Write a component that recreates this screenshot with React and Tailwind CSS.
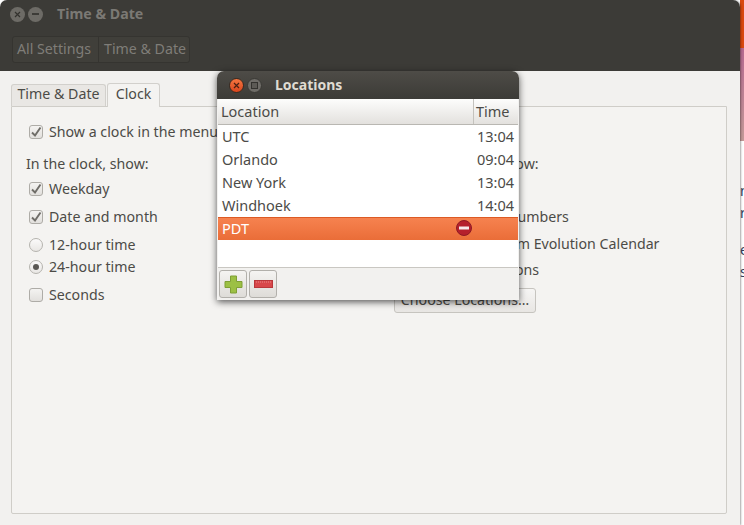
import React from "react"

const CheckBox = ({ checked }) => (
  <span className="w-[14px] h-[14px] shrink-0 rounded-[3px] border border-[#aeaca7] bg-gradient-to-b from-[#f4f3f1] to-[#e2e0dd] flex items-center justify-center">
    {checked && (
      <svg width="12" height="12" viewBox="0 0 12 12">
        <path d="M2 6.5 L5 9.5 L10.5 1.5" fill="none" stroke="#6f6d68" strokeWidth="1.9" />
      </svg>
    )}
  </span>
)

const Radio = ({ checked }) => (
  <span className="w-[14px] h-[14px] shrink-0 rounded-full border border-[#b5b3ae] bg-gradient-to-b from-[#fbfafa] to-[#e9e7e4] flex items-center justify-center">
    {checked && <span className="w-[6px] h-[6px] rounded-full bg-[#5a5854]" />}
  </span>
)

const Option = ({ control, label, className }) => (
  <div className={"flex items-center gap-[6px] h-[20px] ml-[3px] " + (className || "")}>
    {control}
    <span className="whitespace-nowrap">{label}</span>
  </div>
)

const locations = [
  ["UTC", "13:04"],
  ["Orlando", "09:04"],
  ["New York", "13:04"],
  ["Windhoek", "14:04"],
]

const LocationsDialog = () => (
  <div className="absolute z-20 left-[217px] top-[71px] w-[302px] h-[229px] flex flex-col rounded-t-[7px] bg-[#f2f1ef] text-[14.5px] shadow-[0_2px_7px_rgba(0,0,0,0.65)]">
    <div className="h-[28px] rounded-t-[7px] bg-gradient-to-b from-[#4e4c47] to-[#3c3b37] flex items-center pl-[12px]">
      <span className="w-[15px] h-[15px] rounded-full bg-gradient-to-b from-[#f4753f] to-[#d9451d] border border-[#3a2a20] flex items-center justify-center">
        <svg width="7" height="7" viewBox="0 0 7 7">
          <path d="M1 1 L6 6 M6 1 L1 6" stroke="#4a2012" strokeWidth="1.2" />
        </svg>
      </span>
      <span className="w-[15px] h-[15px] ml-[3px] rounded-full bg-[#6e6c67] border border-[#3a3935] flex items-center justify-center">
        <span className="w-[7px] h-[7px] border border-[#33322e] bg-[#5c5a55]" />
      </span>
      <span className="ml-[13px] font-bold text-[14px] text-[#dfdbd2]">Locations</span>
    </div>
    <div className="h-[26px] flex bg-gradient-to-b from-[#fdfdfc] to-[#e3e1de] border-b border-[#b9b7b2] mx-px">
      <div className="w-[256px] pl-[3px] border-r border-[#c4c2bd] flex items-center">Location</div>
      <div className="flex-1 pl-[2px] flex items-center">Time</div>
    </div>
    <div className="h-[142px] bg-white mx-px">
      <div className="h-[92px]">
        {locations.map(([name, time]) => (
          <div key={name} className="h-[23px] flex items-center justify-between px-[4px]">
            <span>{name}</span>
            <span>{time}</span>
          </div>
        ))}
      </div>
      <div className="h-[23px] flex items-center pl-[4px] pb-[2px] bg-gradient-to-b from-[#f6824f] to-[#ea6d38] border-t border-[#dc5a24] text-white">
        <span>PDT</span>
        <svg className="ml-auto mr-[46px]" width="16" height="16" viewBox="0 0 16 16">
          <circle cx="8" cy="8" r="7.5" fill="#b5202c" stroke="#8f1a24" />
          <rect x="3" y="6.5" width="10" height="3" fill="#f6e9e9" />
        </svg>
      </div>
    </div>
    <div className="flex-1 border-t border-[#c9c7c2] flex items-center gap-[2px] pl-[1px] mx-px">
      <button className="w-[28px] h-[28px] rounded-[3px] border border-[#b2b0ab] bg-gradient-to-b from-[#f5f4f2] to-[#dedcd8] flex items-center justify-center">
        <svg width="19" height="19" viewBox="0 0 19 19">
          <path d="M6.5 1 H12.5 V6.5 H18 V12.5 H12.5 V18 H6.5 V12.5 H1 V6.5 H6.5 Z" fill="#9cc044" stroke="#7f9f35" />
        </svg>
      </button>
      <button className="w-[28px] h-[28px] rounded-[3px] border border-[#b2b0ab] bg-gradient-to-b from-[#f5f4f2] to-[#dedcd8] flex items-center justify-center">
        <svg width="19" height="8" viewBox="0 0 19 8">
          <rect x="0.5" y="0.5" width="18" height="7" fill="#d8474a" stroke="#b9373a" />
          <path d="M2 2 H17" stroke="#e98a8a" strokeWidth="1" strokeDasharray="1 1" />
        </svg>
      </button>
    </div>
  </div>
)

export default function App() {
  return (
    <div
      className="relative w-[744px] h-[525px] overflow-hidden flex bg-white text-[14.2px] leading-none text-[#4c4b47]"
      style={{ fontFamily: '"Noto Sans", "Liberation Sans", sans-serif' }}
    >
      <div className="w-[740px] h-full flex flex-col bg-[#f2f1ef] rounded-t-[7px] shadow-[1px_0_2px_rgba(0,0,0,0.35)] relative z-10">
        {/* header */}
        <div className="h-[71px] shrink-0 bg-[#3c3b37] rounded-t-[7px] flex flex-col">
          <div className="h-[28px] flex items-center pl-[10px]">
            <span className="w-[15px] h-[15px] rounded-full bg-[#6d6b66] flex items-center justify-center">
              <svg width="7" height="7" viewBox="0 0 7 7">
                <path d="M1 1 L6 6 M6 1 L1 6" stroke="#33322e" strokeWidth="1.2" />
              </svg>
            </span>
            <span className="w-[15px] h-[15px] ml-[3px] rounded-full bg-[#6d6b66] flex items-center justify-center">
              <span className="w-[7px] h-[1.5px] bg-[#3c3b37]" />
            </span>
            <span className="ml-[14px] font-bold text-[14.2px] text-[#7b7974]">Time &amp; Date</span>
          </div>
          <div className="ml-[12px] mt-[8px] h-[27px] w-[178px] flex items-center rounded-[3px] border border-[#353430] bg-[#403f3a] text-[#7f7d78]">
            <div className="w-[86px] h-full flex items-center pl-[4px] border-r border-[#353430] whitespace-nowrap">All Settings</div>
            <div className="flex-1 pl-[5px] whitespace-nowrap">Time &amp; Date</div>
          </div>
        </div>

        {/* tabs */}
        <div className="flex items-end h-[35px] pl-[11px] shrink-0">
          <div className="w-[95px] h-[22px] pb-[2px] flex items-center justify-center rounded-t-[3px] border border-b-0 border-[#d2d0cc] bg-[#e9e7e4] mr-px">Time &amp; Date</div>
          <div className="w-[53px] h-[24px] pb-[3px] flex items-center justify-center rounded-t-[3px] border border-b-0 border-[#d2d0cc] bg-[#f4f3f1] -mb-px relative z-10">Clock</div>
        </div>

        {/* panel */}
        <div className="ml-[11px] w-[716px] h-[408px] shrink-0 border border-[#cfcdc8] rounded-b-[2px] bg-[#f4f3f1] pt-[15px] pl-[14px] grid grid-cols-[368px_1fr] grid-rows-[20px_1fr]">
          <Option className="col-span-2" control={<CheckBox checked />} label="Show a clock in the menu bar" />
          <div className="pt-[12px]">
            <div className="h-[20px] flex items-center">In the clock, show:</div>
            <Option className="mt-[5px]" control={<CheckBox checked />} label="Weekday" />
            <Option className="mt-[8px]" control={<CheckBox checked />} label="Date and month" />
            <Option className="mt-[8px]" control={<Radio />} label="12-hour time" />
            <Option className="mt-[2px]" control={<Radio checked />} label="24-hour time" />
            <Option className="mt-[8px]" control={<CheckBox />} label="Seconds" />
          </div>
          <div className="pt-[12px]">
            <div className="h-[20px] flex items-center">In the calendar, show:</div>
            <Option className="mt-[5px]" control={<CheckBox checked />} label="Monthly view" />
            <Option className="mt-[8px]" control={<CheckBox />} label="Include week numbers" />
            <Option className="mt-[7px]" control={<CheckBox />} label="New events from Evolution Calendar" />
            <Option className="mt-[6px]" control={<CheckBox />} label="Clocks in locations" />
            <button className="mt-[8px] w-[142px] h-[25px] rounded-[3px] border border-[#c6c4bf] bg-gradient-to-b from-[#f6f5f4] to-[#e8e6e3] text-center">Choose Locations…</button>
          </div>
        </div>
      </div>

      {/* desktop showing behind the window */}
      <div className="w-[4px] h-full overflow-hidden flex flex-col text-[14px] text-[#2f3f5f]">
        <div className="h-[48px] shrink-0 bg-[#d9480f]" />
        <div className="h-[93px] shrink-0 bg-gradient-to-b from-[#b5688f] to-[#c49a98]" />
        <div className="mt-[43px] h-[14px] shrink-0">n</div>
        <div className="mt-[8px] h-[14px] shrink-0">r</div>
        <div className="mt-[23px] h-[14px] shrink-0">e</div>
        <div className="mt-[8px] h-[14px] shrink-0">s</div>
      </div>

      <LocationsDialog />
    </div>
  )
}
